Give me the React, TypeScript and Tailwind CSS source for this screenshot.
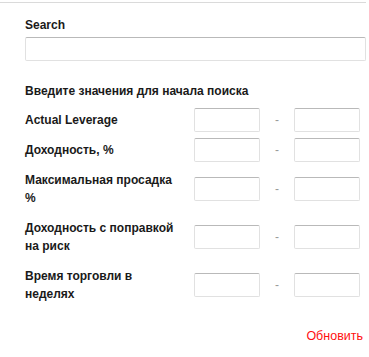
import React from 'react';

const rows = [
    'Actual Leverage',
    'Доходность, %',
    'Максимальная просадка %',
    'Доходность с поправкой на риск',
    'Время торговли в неделях',
];

const inputCls =
    'h-[24px] w-[66px] rounded-[2px] border border-[#e1e1e1] border-t-[#b9b9b9] bg-white outline-none';

export default function App() {
    return (
        <div className="w-[369px] h-[357px] bg-white text-[#1a1a1a] font-['Liberation_Sans',Arial,sans-serif]">
            <div className="h-[2px]" />
            <div className="w-[366px] border-t border-[#dadada]" />

            <div className="pl-[25px] pr-[3px]">
                {/* Search */}
                <label className="block mt-[13px] text-[12px] font-bold leading-[18px]">Search</label>
                <input className="mt-[3px] block h-[24px] w-[341px] rounded-[2px] border border-[#e1e1e1] border-t-[#b9b9b9] bg-white outline-none" />

                {/* Filters */}
                <p className="mt-[21px] text-[12px] font-bold leading-[18px]">
                    Введите значения для начала поиска
                </p>

                <div className="mt-[8px] flex flex-col gap-[6px]">
                    {rows.map((r) => (
                        <div key={r} className="flex items-center">
                            <div className="w-[169px]">
                                <p className="w-[150px] py-[3px] text-[12px] font-bold leading-[18px]">{r}</p>
                            </div>
                            <input className={inputCls} />
                            <span className="w-[34px] text-center text-[12px] leading-[18px] text-[#999]">-</span>
                            <input className={inputCls} />
                        </div>
                    ))}
                </div>

                <div className="mt-[17px] w-[338px] text-right">
                    <button className="text-[12.5px] leading-[18px] text-[#ff1010]">Обновить</button>
                </div>
            </div>
        </div>
    );
}
